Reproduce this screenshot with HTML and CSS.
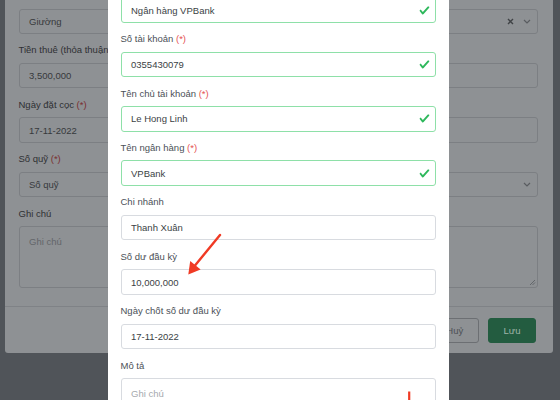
FILE: index.html
```html
<!DOCTYPE html>
<html lang="vi">
<head>
<meta charset="utf-8">
<title>Form</title>
<link rel="stylesheet" href="styles.css">
</head>
<body>
<div class="page">
  <div class="bg-modal">
    <div class="bg-body">
      <div class="field">
        <div class="ctl">
          <span class="val">Giường</span>
          <span class="icons">
            <svg class="ic-x" width="7" height="7" viewBox="0 0 7 7"><path d="M1 1L6 6M6 1L1 6" stroke="#404346" stroke-width="1.4" fill="none"/></svg>
            <svg class="ic-chev" width="8" height="5" viewBox="0 0 8 5"><path d="M1 1L4 4L7 1" stroke="#595c60" stroke-width="1.2" fill="none"/></svg>
          </span>
        </div>
      </div>
      <div class="field">
        <label class="lbl">Tiền thuê (thỏa thuận) <span class="req">(*)</span></label>
        <div class="ctl"><span class="val">3,500,000</span></div>
      </div>
      <div class="field">
        <label class="lbl">Ngày đặt cọc <span class="req">(*)</span></label>
        <div class="ctl"><span class="val">17-11-2022</span></div>
      </div>
      <div class="field">
        <label class="lbl">Số quỹ <span class="req">(*)</span></label>
        <div class="ctl">
          <span class="val">Số quỹ</span>
          <span class="icons">
            <svg class="ic-chev" width="8" height="5" viewBox="0 0 8 5"><path d="M1 1L4 4L7 1" stroke="#595c60" stroke-width="1.2" fill="none"/></svg>
          </span>
        </div>
      </div>
      <div class="field">
        <label class="lbl">Ghi chú</label>
        <div class="ctl area">
          <span class="ph">Ghi chú</span>
          <svg class="grip" width="7" height="7" viewBox="0 0 7 7"><path d="M1 6L6 1M3.5 6L6 3.5" stroke="#5f6266" stroke-width="0.9" fill="none"/></svg>
        </div>
      </div>
    </div>
    <div class="bg-footer">
      <button class="btn btn-cancel">Huỷ</button>
      <button class="btn btn-save">Lưu</button>
    </div>
  </div>

  <div class="fg-modal">
    <div class="field">
      <div class="ctl valid"><span class="val">Ngân hàng VPBank</span>
        <svg class="check" width="11" height="11" viewBox="0 0 8 8"><path fill="#2eb85c" d="M2.3 6.73L.6 4.53c-.4-1.04.46-1.4 1.1-.8l1.1 1.4 3.4-3.8c.6-.63 1.6-.27 1.2.7l-4 4.6c-.43.5-.8.4-1.1.1z"/></svg>
      </div>
    </div>
    <div class="field">
      <label class="lbl">Số tài khoản <span class="req">(*)</span></label>
      <div class="ctl valid"><span class="val">0355430079</span>
        <svg class="check" width="11" height="11" viewBox="0 0 8 8"><path fill="#2eb85c" d="M2.3 6.73L.6 4.53c-.4-1.04.46-1.4 1.1-.8l1.1 1.4 3.4-3.8c.6-.63 1.6-.27 1.2.7l-4 4.6c-.43.5-.8.4-1.1.1z"/></svg>
      </div>
    </div>
    <div class="field">
      <label class="lbl">Tên chủ tài khoản <span class="req">(*)</span></label>
      <div class="ctl valid"><span class="val">Le Hong Linh</span>
        <svg class="check" width="11" height="11" viewBox="0 0 8 8"><path fill="#2eb85c" d="M2.3 6.73L.6 4.53c-.4-1.04.46-1.4 1.1-.8l1.1 1.4 3.4-3.8c.6-.63 1.6-.27 1.2.7l-4 4.6c-.43.5-.8.4-1.1.1z"/></svg>
      </div>
    </div>
    <div class="field">
      <label class="lbl">Tên ngân hàng <span class="req">(*)</span></label>
      <div class="ctl valid"><span class="val">VPBank</span>
        <svg class="check" width="11" height="11" viewBox="0 0 8 8"><path fill="#2eb85c" d="M2.3 6.73L.6 4.53c-.4-1.04.46-1.4 1.1-.8l1.1 1.4 3.4-3.8c.6-.63 1.6-.27 1.2.7l-4 4.6c-.43.5-.8.4-1.1.1z"/></svg>
      </div>
    </div>
    <div class="field">
      <label class="lbl">Chi nhánh</label>
      <div class="ctl"><span class="val">Thanh Xuân</span></div>
    </div>
    <div class="field">
      <label class="lbl">Số dư đầu kỳ</label>
      <div class="ctl"><span class="val">10,000,000</span></div>
    </div>
    <div class="field">
      <label class="lbl">Ngày chốt số dư đầu kỳ</label>
      <div class="ctl"><span class="val">17-11-2022</span></div>
    </div>
    <div class="field">
      <label class="lbl">Mô tả</label>
      <div class="ctl area"><span class="ph">Ghi chú</span></div>
    </div>
  </div>

  <svg class="annot" width="560" height="400" viewBox="0 0 560 400">
    <line x1="220" y1="235" x2="195" y2="265.5" stroke="#f03a24" stroke-width="2.4" stroke-linecap="round"/>
    <polygon points="188.3,274.5 190.2,261 200.6,269.5" fill="#f03a24"/>
    <line x1="409.2" y1="391.5" x2="409.2" y2="410" stroke="#f03a24" stroke-width="2.2"/>
  </svg>
</div>
</body>
</html>
```
FILE: styles.css
```css
html, body {
  margin: 0;
  padding: 0;
}

.page {
  position: relative;
  width: 560px;
  height: 400px;
  overflow: hidden;
  background: #505459;
  font-family: "Liberation Sans", Arial, sans-serif;
  font-size: 9.5px;
}

/* background (dimmed) modal */
.bg-modal {
  margin-left: 5px;
  width: 548px;
  background: #8e9194;
  border-radius: 0 0 3px 3px;
}

.bg-body {
  padding: 8.5px 14.7px 18.4px 13.5px;
}

.field {
  margin-bottom: 9.4px;
}

.bg-body .field:last-child {
  margin-bottom: 0;
}

.lbl {
  display: block;
  line-height: 14px;
  margin-bottom: 5.5px;
  white-space: nowrap;
}

.req {
  color: #e55353;
}

.ctl {
  position: relative;
  height: 25.5px;
  box-sizing: border-box;
  border: 1px solid;
  border-radius: 3px;
  display: flex;
  align-items: center;
  padding: 0 9.5px;
  white-space: nowrap;
}

.ctl .val {
  flex: 1;
}

.ctl.area {
  height: 62px;
  align-items: flex-start;
  padding-top: 7.5px;
  line-height: 14px;
}

.icons {
  display: flex;
  align-items: center;
  gap: 9px;
  margin-right: -3px;
}

.grip {
  position: absolute;
  right: 1px;
  bottom: 1px;
}

.bg-modal .lbl {
  color: #2e3033;
}

.bg-modal .req {
  color: #7a2f30;
}

.bg-modal .ctl {
  border-color: #7c7f83;
  color: #37393c;
}

.bg-modal .ph {
  color: #63666a;
}

.bg-footer {
  border-top: 1px solid #7f8286;
  padding: 10.3px 17px 9.6px;
  display: flex;
  justify-content: flex-end;
  gap: 9.4px;
}

.btn {
  height: 25.4px;
  padding: 0 14.5px;
  border-radius: 3px;
  font-family: inherit;
  font-size: 9.5px;
  box-sizing: border-box;
}

.btn-cancel {
  background: transparent;
  border: 1px solid #6c6f73;
  color: #4d5054;
}

.btn-save {
  background: #235c40;
  border: 1px solid #235c40;
  color: #9fb5a9;
}

/* foreground modal */
.fg-modal {
  position: absolute;
  left: 108px;
  top: -2.7px;
  bottom: -60px;
  width: 341px;
  box-sizing: border-box;
  padding: 0 13px 0 12.5px;
  background: #ffffff;
}

.fg-modal .lbl {
  color: #4b5057;
}

.fg-modal .ctl {
  border-color: #d8dbe0;
  color: #3b3f45;
}

.fg-modal .ctl.valid {
  border-color: #8ee0a8;
  padding-right: 24px;
}

.fg-modal .ph {
  color: #a5a9ae;
}

.check {
  position: absolute;
  right: 5.5px;
  top: 50%;
  margin-top: -5.5px;
}

.annot {
  position: absolute;
  left: 0;
  top: 0;
  pointer-events: none;
}
```
